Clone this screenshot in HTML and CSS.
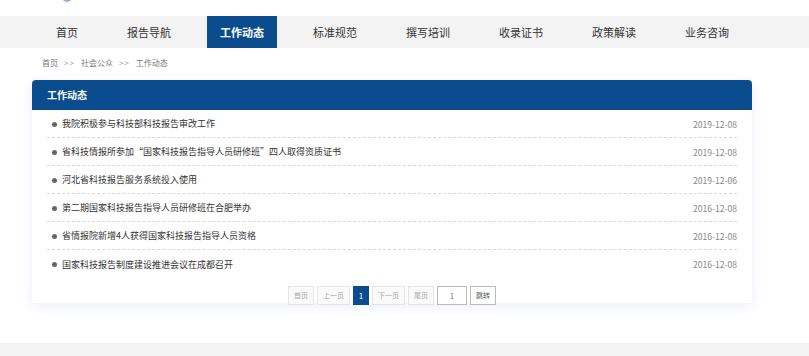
FILE: index.html
```html
<!DOCTYPE html>
<html lang="zh-CN">
<head>
    <meta charset="UTF-8">
    <meta name="viewport" content="width=device-width, initial-scale=1.0">
    <title>工作动态</title>
    <link rel="stylesheet" href="styles.css">
</head>
<body>
    <div class="top">
        <span class="logo"></span>
    </div>

    <div class="nav">
        <a href="#" class="nav-item">首页</a>
        <a href="#" class="nav-item">报告导航</a>
        <a href="#" class="nav-item active">工作动态</a>
        <a href="#" class="nav-item">标准规范</a>
        <a href="#" class="nav-item">撰写培训</a>
        <a href="#" class="nav-item">收录证书</a>
        <a href="#" class="nav-item">政策解读</a>
        <a href="#" class="nav-item">业务咨询</a>
    </div>

    <div class="crumbs">
        <a href="#">首页</a>
        <span class="sep">&gt;&gt;</span>
        <a href="#">社会公众</a>
        <span class="sep">&gt;&gt;</span>
        <span>工作动态</span>
    </div>

    <div class="panel">
        <div class="panel-title">工作动态</div>
        <ul class="news">
            <li><a href="#">我院积极参与科技部科技报告审改工作</a><span class="date">2019-12-08</span></li>
            <li><a href="#">省科技情报所参加“国家科技报告指导人员研修班”四人取得资质证书</a><span class="date">2019-12-08</span></li>
            <li><a href="#">河北省科技报告服务系统投入使用</a><span class="date">2019-12-06</span></li>
            <li><a href="#">第二期国家科技报告指导人员研修班在合肥举办</a><span class="date">2016-12-08</span></li>
            <li><a href="#">省情报院新增4人获得国家科技报告指导人员资格</a><span class="date">2016-12-08</span></li>
            <li><a href="#">国家科技报告制度建设推进会议在成都召开</a><span class="date">2016-12-08</span></li>
        </ul>
        <div class="pager">
            <a href="#" class="pg">首页</a>
            <a href="#" class="pg">上一页</a>
            <a href="#" class="pg current">1</a>
            <a href="#" class="pg">下一页</a>
            <a href="#" class="pg">尾页</a>
            <input type="text" class="pg-input" value="1">
            <a href="#" class="pg go">跳转</a>
        </div>
    </div>

    <div class="footer"></div>
</body>
</html>
```

FILE: styles.css
```css
* {
    margin: 0;
    padding: 0;
    box-sizing: border-box;
}

body {
    font-family: "Noto Sans CJK SC", "Noto Sans", sans-serif;
    background: #fff;
    color: #333;
    width: 809px;
    height: 356px;
    overflow: hidden;
}

a {
    color: inherit;
    text-decoration: none;
}

.top {
    height: 16px;
    position: relative;
}

.logo {
    position: absolute;
    left: 62px;
    top: -8px;
    width: 10px;
    height: 10px;
    border-radius: 50%;
    background: #8fb0dc;
}

.nav {
    display: flex;
    height: 32px;
    background: #f3f3f3;
    padding-left: 43px;
}

.nav-item {
    display: block;
    padding: 0 13px;
    margin-right: 23px;
    line-height: 32px;
    font-size: 11px;
    color: #333;
}

.nav-item.active {
    background: #0b4c8f;
    color: #fff;
    font-weight: bold;
}

.crumbs {
    margin: 10px 0 0 42px;
    height: 10px;
    line-height: 10px;
    font-size: 8px;
    color: #777;
    display: flex;
    gap: 6px;
}

.crumbs .sep {
    color: #999;
    letter-spacing: 1px;
}

.panel {
    margin: 12px 0 0 32px;
    width: 720px;
    height: 223px;
    background: #fff;
    border-radius: 4px 4px 0 0;
    box-shadow: 0 3px 12px rgba(30, 70, 170, 0.09);
}

.panel-title {
    height: 30px;
    line-height: 30px;
    padding-left: 15px;
    background: #0b4c8f;
    color: #fff;
    font-size: 10px;
    font-weight: bold;
    border-radius: 4px 4px 0 0;
}

.news {
    list-style: none;
    padding: 0 15px;
}

.news li {
    display: flex;
    justify-content: space-between;
    align-items: center;
    height: 28px;
    border-bottom: 1px dashed #d9d9d9;
    font-size: 9px;
}

.news li:last-child {
    border-bottom: none;
}

.news li a {
    position: relative;
    padding-left: 15px;
    color: #333;
}

.news li a::before {
    content: "";
    position: absolute;
    left: 5px;
    top: 50%;
    width: 5px;
    height: 5px;
    margin-top: -2px;
    border-radius: 50%;
    background: #666;
}

.date {
    font-size: 8.6px;
    color: #888;
}

.pager {
    display: flex;
    justify-content: center;
    gap: 3px;
    margin-top: 8px;
}

.pg {
    display: block;
    height: 19px;
    line-height: 17px;
    padding: 0 5px;
    border: 1px solid #e6e6e6;
    background: #fafafa;
    color: #aaa;
    font-size: 7px;
}

.pg.current {
    width: 16px;
    padding: 0;
    text-align: center;
    background: #0b4c8f;
    border-color: #0b4c8f;
    color: #fff;
    font-size: 8px;
}

.pg-input {
    width: 30px;
    height: 19px;
    border: 1px solid #bbb;
    text-align: center;
    font-size: 7px;
    color: #5566aa;
    font-family: inherit;
    outline: none;
}

.pg.go {
    background: #fff;
    border-color: #bbb;
    color: #555;
}

.footer {
    margin-top: 40px;
    height: 20px;
    background: #f3f3f3;
}
```
